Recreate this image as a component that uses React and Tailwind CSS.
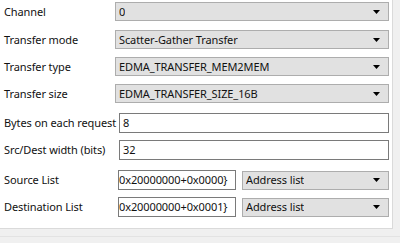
import React from 'react';

const font = { fontFamily: '"Noto Sans", Tahoma, sans-serif' };

const Arrow = () => (
  <svg width="7" height="4" viewBox="0 0 7 4" className="shrink-0">
    <path d="M0 0h7L3.5 4z" fill="#000" />
  </svg>
);

const Combo = ({ value, className = '' }) => (
  <div className={`h-[19px] flex items-center justify-between bg-[#e1e1e1] border border-[#adadad] pl-[3px] pr-[8px] ${className}`}>
    <span className="truncate">{value}</span>
    <Arrow />
  </div>
);

const Input = ({ value }) => (
  <div className="h-[20px] flex-1 flex items-center bg-white border border-[#7a7a7a] pl-[3px] ml-[4px]">
    {value}
  </div>
);

const Row = ({ label, children, className = '' }) => (
  <div className={`flex items-center ${className}`}>
    <div className="w-[115px] shrink-0 pl-[4px] whitespace-nowrap">{label}</div>
    <div className="flex-1 flex items-center">{children}</div>
  </div>
);

const App = () => {
  return (
    <div className="w-[400px] h-[243px] bg-[#f0f0f0] text-[11px] leading-[14px] tracking-[-0.1px] text-[#111] overflow-hidden" style={font}>
      <div className="w-[393px] h-[229px] bg-white border-r border-b border-[#dadada] pr-[3px] pt-[2px]">
        <div className="flex flex-col">
          <Row label="Channel"><Combo value="0" className="flex-1" /></Row>
          <Row label="Transfer mode" className="mt-[9px]"><Combo value="Scatter-Gather Transfer" className="flex-1" /></Row>
          <Row label="Transfer type" className="mt-[8px]"><Combo value="EDMA_TRANSFER_MEM2MEM" className="flex-1" /></Row>
          <Row label="Transfer size" className="mt-[8px]"><Combo value="EDMA_TRANSFER_SIZE_16B" className="flex-1" /></Row>
          <Row label="Bytes on each request" className="mt-[10px]"><Input value="8" /></Row>
          <Row label="Src/Dest width (bits)" className="mt-[7px]"><Input value="32" /></Row>
          <Row label="Source List" className="mt-[10px]">
            <div className="w-[118px] ml-[3px] h-[20px] flex items-center bg-white border border-[#7a7a7a] overflow-hidden whitespace-nowrap">0x20000000+0x0000}</div>
            <Combo value="Address list" className="flex-1 ml-[6px]" />
          </Row>
          <Row label="Destination List" className="mt-[7px]">
            <div className="w-[118px] ml-[3px] h-[20px] flex items-center bg-white border border-[#7a7a7a] overflow-hidden whitespace-nowrap">0x20000000+0x0001}</div>
            <Combo value="Address list" className="flex-1 ml-[6px]" />
          </Row>
        </div>
      </div>
      <div className="h-[7px]" />
      <div className="h-px bg-[#e3e3e3]" />
    </div>
  );
};

export default App;
